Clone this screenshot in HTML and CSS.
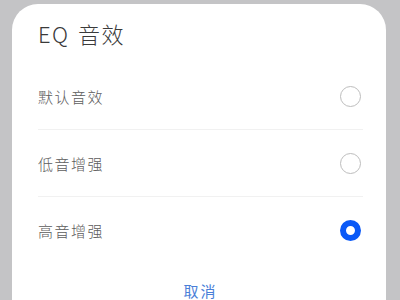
FILE: index.html
```html
<!DOCTYPE html>
<html lang="zh-CN">
<head>
  <meta charset="UTF-8">
  <meta name="viewport" content="width=device-width, initial-scale=1.0">
  <title>EQ 音效</title>
  <link rel="stylesheet" href="styles.css">
</head>
<body>
  <div class="dialog">
    <h1 class="dialog-title">EQ 音效</h1>

    <ul class="option-list">
      <li class="option">
        <span class="option-label">默认音效</span>
        <span class="radio"></span>
      </li>
      <li class="option">
        <span class="option-label">低音增强</span>
        <span class="radio"></span>
      </li>
      <li class="option">
        <span class="option-label">高音增强</span>
        <span class="radio checked"></span>
      </li>
    </ul>

    <div class="dialog-footer">
      <button class="cancel">取消</button>
    </div>
  </div>
</body>
</html>
```

FILE: styles.css
```css
/* Reset */
* {
  margin: 0;
  padding: 0;
  box-sizing: border-box;
}

body {
  font-family: 'Noto Sans CJK SC', 'Noto Sans', sans-serif;
  background-color: #c4c4c6; /* dimmed screen behind the dialog */
  height: 300px;
  overflow: hidden;
}

/* the sheet runs on past the bottom of the screen, so only the top corners are round */
.dialog {
  width: 374px;
  height: 296px;
  margin: 4px 0 0 12px;
  padding: 0 23px 0 26px;
  background-color: #ffffff;
  border-radius: 26px 26px 0 0;
}

.dialog-title {
  height: 59px;
  padding-bottom: 2px;
  display: flex;
  align-items: center;
  font-size: 22px;
  font-weight: 300;
  letter-spacing: 1.5px;
  word-spacing: 2px;
  color: #3a3a3a;
}

.option-list {
  list-style: none;
}

.option {
  height: 67px;
  display: flex;
  align-items: center;
  justify-content: space-between;
  border-bottom: 1px solid #f1f1f1;
}

.option:last-child {
  border-bottom: none;
}

.option-label {
  font-size: 15px;
  font-weight: 300;
  letter-spacing: 1.5px;
  color: #5c5c5c;
}

.radio {
  width: 21px;
  height: 21px;
  margin-right: 2px;
  border: 1.5px solid #bdbdbd;
  border-radius: 50%;
}

.radio.checked {
  border: 6px solid #0a59f7;
}

.dialog-footer {
  margin-top: 17px;
  display: flex;
  justify-content: center;
}

.cancel {
  font-family: inherit;
  font-size: 15px;
  line-height: 20px;
  letter-spacing: 2px;
  color: #4a7fd8;
  background: none;
  border: none;
  cursor: pointer;
}
```
